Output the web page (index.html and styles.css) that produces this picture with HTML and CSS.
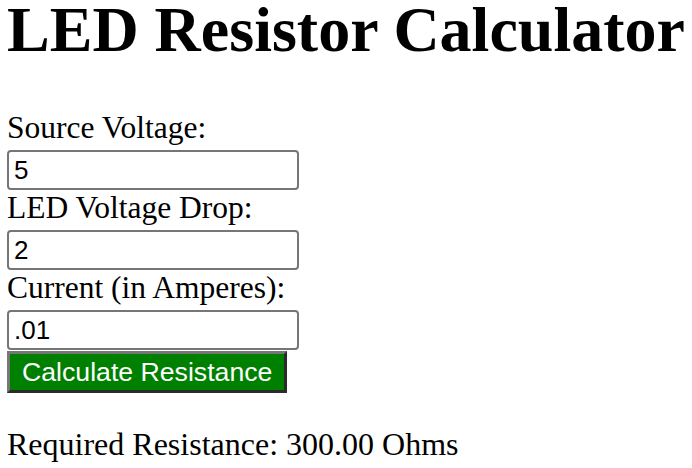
FILE: index.html
```html
<!DOCTYPE html>
<html>
<head>
<meta charset="utf-8">
<title>LED Resistor Calculator</title>
<link rel="stylesheet" href="styles.css">
</head>
<body>
<h1 class="title">LED Resistor Calculator</h1>
<form class="calc">
  <label class="field-label" for="vs">Source Voltage:</label>
  <input class="field-input" id="vs" type="text" value="5">
  <label class="field-label" for="vf">LED Voltage Drop:</label>
  <input class="field-input" id="vf" type="text" value="2">
  <label class="field-label" for="cur">Current (in Amperes):</label>
  <input class="field-input" id="cur" type="text" value=".01">
  <button class="calc-btn" type="button">Calculate Resistance</button>
</form>
<p class="result">Required Resistance: 300.00 Ohms</p>
</body>
</html>
```
FILE: styles.css
```css
html, body {
  margin: 0;
  background: #fff;
}
body {
  padding: 0 7px;
  font-family: "Liberation Serif", "Times New Roman", serif;
  color: #000;
}
.title {
  margin: 0 0 50px 0;
  font-size: 64px;
  line-height: 60px;
  font-weight: bold;
  white-space: nowrap;
}
.calc {
  display: flex;
  flex-direction: column;
  align-items: flex-start;
}
.field-label {
  display: block;
  font-size: 31.5px;
  line-height: 36px;
  padding-bottom: 4px;
}
.field-input {
  box-sizing: border-box;
  width: 292px;
  height: 40px;
  margin: 0;
  padding: 0 5px;
  border: 2px solid #767676;
  border-radius: 4px;
  font-family: "Liberation Sans", Arial, sans-serif;
  font-size: 26px;
  color: #000;
  background: #fff;
}
.calc-btn {
  box-sizing: border-box;
  margin-top: 1px;
  height: 42px;
  padding: 0 12px;
  border: 3px solid;
  border-color: #767676 #2b2b2b #2b2b2b #767676;
  background: #008000;
  color: #fff;
  font-family: "Liberation Sans", Arial, sans-serif;
  font-size: 26.67px;
  line-height: 1;
}
.result {
  margin: 33px 0 0 0;
  font-size: 32px;
}
```
